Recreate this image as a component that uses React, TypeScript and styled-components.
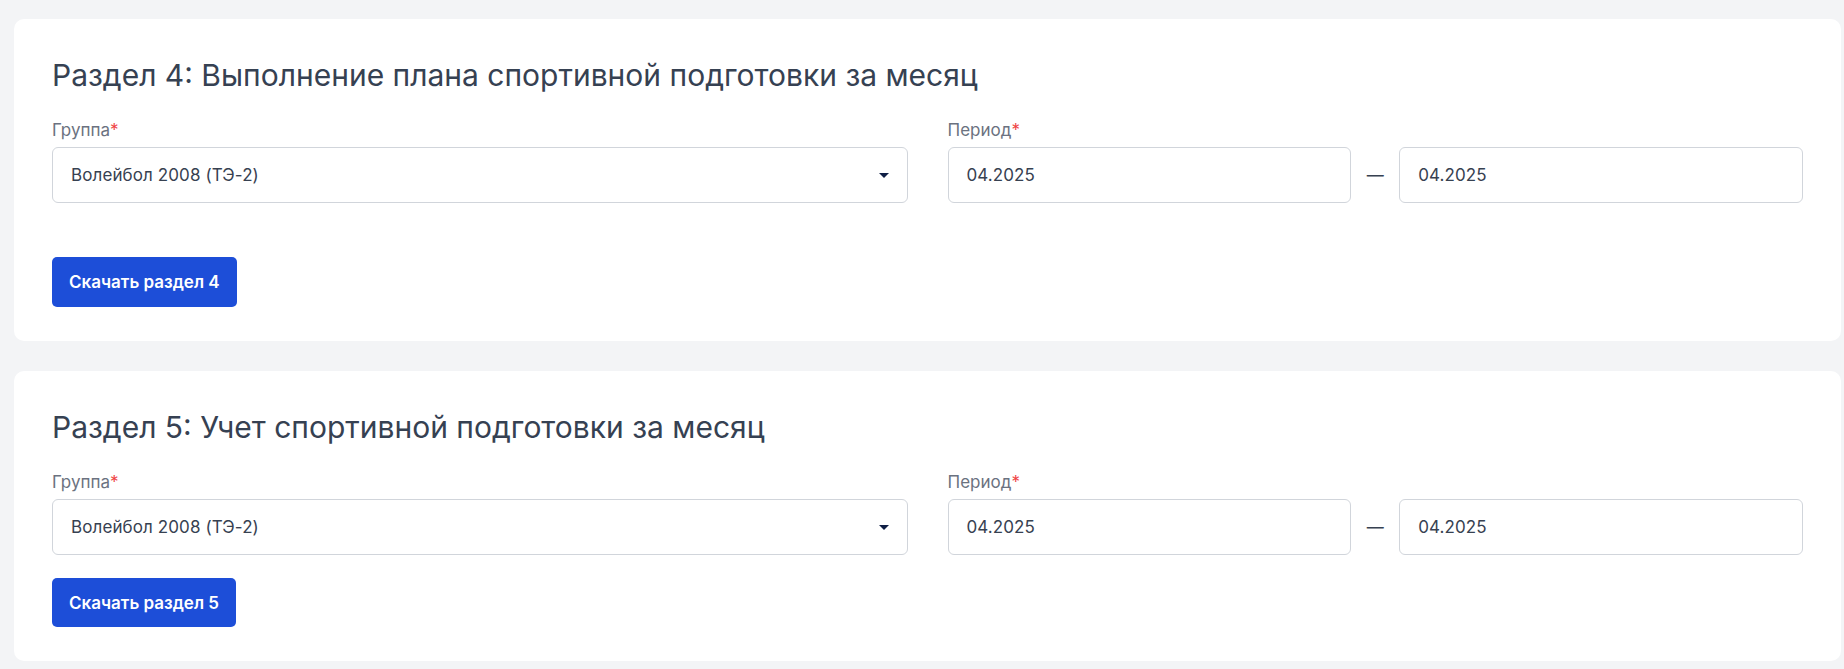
import React from "react";
import styled, { createGlobalStyle } from "styled-components";

const GlobalStyle = createGlobalStyle`
  html, body {
    margin: 0;
    padding: 0;
    background: #f3f4f6;
    font-family: Inter, "Noto Sans", "Liberation Sans", sans-serif;
  }
  * { box-sizing: border-box; }
`;

const Page = styled.div`
  display: flex;
  flex-direction: column;
  gap: 30px;
  padding: 19px 3px 8px 14px;
  background: #f3f4f6;
`;

const Card = styled.section`
  background: #ffffff;
  border-radius: 10px;
  padding: 38px 38px 34px 38px;
  display: flex;
  flex-direction: column;
`;

const Title = styled.h2`
  margin: 0 0 27px 0;
  font-size: 30px;
  line-height: 36px;
  font-weight: 400;
  color: #364152;
`;

const FormRow = styled.div`
  display: grid;
  grid-template-columns: 1fr 1fr;
  column-gap: 40px;
`;

const Field = styled.div`
  display: flex;
  flex-direction: column;
`;

const Label = styled.label`
  font-size: 17px;
  line-height: 20px;
  color: #6b7280;
  margin-bottom: 7px;
`;

const Required = styled.span`
  color: #ef4444;
`;

const Box = styled.div`
  height: 56px;
  border: 1px solid #d1d5db;
  border-radius: 6px;
  background: #ffffff;
  display: flex;
  align-items: center;
  padding: 0 18px;
  font-size: 17px;
  letter-spacing: 0.1px;
  color: #374151;
`;

const SelectBox = styled(Box)`
  justify-content: space-between;
`;

const Caret = styled.span`
  width: 0;
  height: 0;
  border-left: 5px solid transparent;
  border-right: 5px solid transparent;
  border-top: 5px solid #0f1e45;
`;

const PeriodRow = styled.div`
  display: flex;
  align-items: center;
`;

const PeriodInput = styled(Box)`
  flex: 1;
`;

const Dash = styled.span`
  width: 48px;
  text-align: center;
  font-size: 17px;
  color: #374151;
`;

const Actions = styled.div<{ $gap: number }>`
  margin-top: ${(p) => p.$gap}px;
  display: flex;
`;

const Button = styled.button<{ $h: number }>`
  height: ${(p) => p.$h}px;
  padding: 0 17px;
  border: none;
  border-radius: 5px;
  background: #1d4ed8;
  color: #ffffff;
  font-family: inherit;
  font-size: 17px;
  font-weight: 600;
  cursor: pointer;
`;

type SectionProps = { num: number; title: string; gap: number; btnH: number };

const Section: React.FC<SectionProps> = ({ num, title, gap, btnH }) => (
  <Card>
    <Title>
      Раздел {num}: {title}
    </Title>
    <FormRow>
      <Field>
        <Label>
          Группа<Required>*</Required>
        </Label>
        <SelectBox>
          <span>Волейбол 2008 (ТЭ-2)</span>
          <Caret />
        </SelectBox>
      </Field>
      <Field>
        <Label>
          Период<Required>*</Required>
        </Label>
        <PeriodRow>
          <PeriodInput>04.2025</PeriodInput>
          <Dash>—</Dash>
          <PeriodInput>04.2025</PeriodInput>
        </PeriodRow>
      </Field>
    </FormRow>
    <Actions $gap={gap}>
      <Button $h={btnH}>Скачать раздел {num}</Button>
    </Actions>
  </Card>
);

export default function App() {
  return (
    <>
      <GlobalStyle />
      <Page>
        <Section num={4} title="Выполнение плана спортивной подготовки за месяц" gap={54} btnH={50} />
        <Section num={5} title="Учет спортивной подготовки за месяц" gap={23} btnH={49} />
      </Page>
    </>
  );
}
